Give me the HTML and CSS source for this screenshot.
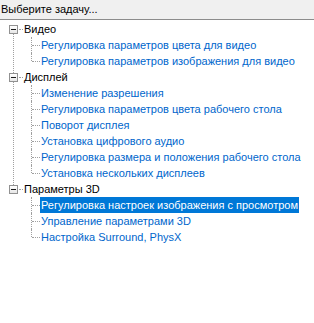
FILE: index.html
```html
<!DOCTYPE html>
<html lang="ru">
<head>
    <meta charset="UTF-8">
    <title>Выберите задачу</title>
    <link rel="stylesheet" href="styles.css">
</head>
<body>
    <div class="task-header">Выберите задачу...</div>
    <ul class="tree">
        <li class="node">
            <div class="node-row"><span class="toggle"></span><span class="node-label">Видео</span></div>
            <ul class="children">
                <li><span class="link">Регулировка параметров цвета для видео</span></li>
                <li><span class="link">Регулировка параметров изображения для видео</span></li>
            </ul>
        </li>
        <li class="node">
            <div class="node-row"><span class="toggle"></span><span class="node-label">Дисплей</span></div>
            <ul class="children">
                <li><span class="link">Изменение разрешения</span></li>
                <li><span class="link">Регулировка параметров цвета рабочего стола</span></li>
                <li><span class="link">Поворот дисплея</span></li>
                <li><span class="link">Установка цифрового аудио</span></li>
                <li><span class="link">Регулировка размера и положения рабочего стола</span></li>
                <li><span class="link">Установка нескольких дисплеев</span></li>
            </ul>
        </li>
        <li class="node">
            <div class="node-row"><span class="toggle"></span><span class="node-label">Параметры 3D</span></div>
            <ul class="children">
                <li><span class="link selected">Регулировка настроек изображения с просмотром</span></li>
                <li><span class="link">Управление параметрами 3D</span></li>
                <li><span class="link">Настройка Surround, PhysX</span></li>
            </ul>
        </li>
    </ul>
</body>
</html>
```

FILE: styles.css
```css
body {
    margin: 0;
    padding: 0;
    background-color: #fff;
    font-family: "Liberation Sans", Arial, sans-serif;
    font-size: 11px;
    color: #000;
}
.task-header {
    height: 19px;
    line-height: 18px;
    padding-left: 1px;
    background-color: #f0f0f0;
    border-bottom: 1px solid #8c8c8c;
}
.tree,
.children {
    list-style: none;
    margin: 0;
    padding: 0;
}
.tree {
    padding-top: 1px;
}
.node {
    position: relative;
}
/* вертикальная линия между узлами */
.node::before {
    content: "";
    position: absolute;
    left: 13px;
    top: 8px;
    bottom: -8px;
    border-left: 1px dotted #a0a0a0;
}
.node:last-child::before {
    display: none;
}
.node-row {
    display: flex;
    align-items: center;
    height: 16px;
}
.toggle {
    position: relative;
    box-sizing: border-box;
    width: 9px;
    height: 9px;
    margin-left: 9px;
    border: 1px solid #919191;
    background: linear-gradient(#fff, #e6e6e6);
    z-index: 1;
}
.toggle::after {
    content: "";
    position: absolute;
    left: 1px;
    right: 1px;
    top: 3px;
    height: 1px;
    background-color: #1a1a1a;
}
.node-label {
    display: flex;
    align-items: center;
    padding-left: 6px;
    height: 16px;
    position: relative;
}
.node-label::before {
    content: "";
    position: absolute;
    left: 1px;
    width: 4px;
    top: 8px;
    border-top: 1px dotted #a0a0a0;
}
.children li {
    position: relative;
    height: 16px;
    padding-left: 40px;
    display: flex;
    align-items: center;
}
.children li::before {
    content: "";
    position: absolute;
    left: 31px;
    top: 0;
    bottom: 0;
    border-left: 1px dotted #a0a0a0;
}
.children li:last-child::before {
    bottom: 8px;
}
.children li::after {
    content: "";
    position: absolute;
    left: 32px;
    width: 8px;
    top: 8px;
    border-top: 1px dotted #a0a0a0;
}
.link {
    color: #0066cc;
    padding: 0 1px;
    height: 16px;
    line-height: 16px;
    white-space: nowrap;
}
.link.selected {
    background-color: #0078d7;
    color: #fff;
}
```
